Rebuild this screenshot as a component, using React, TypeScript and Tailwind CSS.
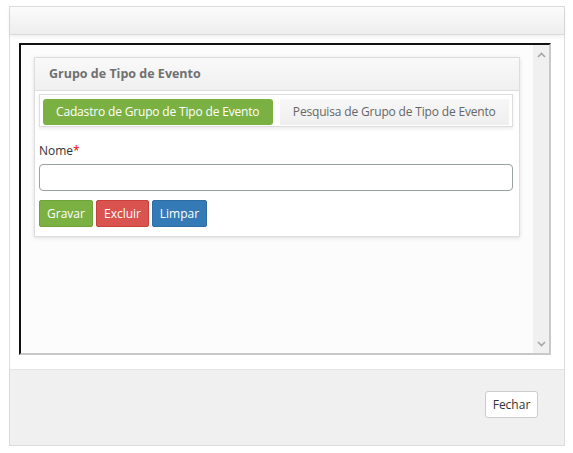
import React from 'react';

function Chevron({ up }: { up?: boolean }) {
  return (
    <svg width="9" height="6" viewBox="0 0 9 6" className="block">
      <path
        d={up ? 'M1 5 L4.5 1.5 L8 5' : 'M1 1 L4.5 4.5 L8 1'}
        fill="none"
        stroke="#a6a6a6"
        strokeWidth="1.6"
      />
    </svg>
  );
}

export default function App() {
  return (
    <div
      className="w-[573px] h-[453px] bg-white pt-[6px] pl-[9px] text-[12px] text-[#333]"
      style={{ fontFamily: '"Open Sans", "Noto Sans", sans-serif' }}
    >
      <div className="w-[556px] h-[440px] border border-[#dcdcdc] flex flex-col">
        {/* modal header */}
        <div className="h-[28px] bg-gradient-to-b from-[#fbfbfb] to-[#eeeeee] border-b border-[#dadada] shadow-[0_2px_4px_rgba(0,0,0,0.07)] relative z-10" />

        {/* modal body */}
        <div className="bg-white pl-[9px] pt-[8px] pb-[14px]">
          <div className="w-[532px] h-[312px] border-2 border-t-[#111] border-l-[#111] border-r-[#c8c8c8] border-b-[#c8c8c8] bg-[#fcfcfc] flex">
            <div className="flex-1 pl-[13px] pr-[13px] pt-[12px]">
              {/* panel */}
              <div className="w-[486px] border border-[#dddddd] bg-white shadow-[0_1px_4px_rgba(0,0,0,0.12)]">
                <div className="h-[33px] bg-gradient-to-b from-[#f9f9f9] to-[#f0f0f0] border-b border-[#dddddd] pl-[14px] flex items-center">
                  <span className="text-[12.5px] font-bold text-[#707070] pt-[1px]">Grupo de Tipo de Evento</span>
                </div>
                <div className="pl-[4px] pr-[6px] pt-[3px] pb-[9px]">
                  {/* tabs */}
                  <div className="border border-[#dddddd] px-[3px] pt-[4px] pb-[1px] flex gap-[7px] shadow-[0_2px_3px_rgba(0,0,0,0.08)]">
                    <div className="flex-1 h-[26px] rounded-[3px] bg-[#7bb142] text-white flex items-center justify-center tracking-[-0.17px]">
                      Cadastro de Grupo de Tipo de Evento
                    </div>
                    <div className="flex-1 h-[26px] bg-gradient-to-b from-[#f7f7f7] to-[#efefef] text-[#666] flex items-center justify-center tracking-[-0.17px]">
                      Pesquisa de Grupo de Tipo de Evento
                    </div>
                  </div>

                  <div className="mt-[15px] leading-[17px] text-[#333]">
                    Nome<span className="text-[#e00]">*</span>
                  </div>
                  <div className="mt-[5px] h-[27px] border border-[#9aa29e] rounded-[4px] bg-white" />

                  <div className="mt-[9px] flex gap-[3px]">
                    <button className="h-[27px] w-[54px] rounded-[2px] bg-[#7bb142] border border-[#6ea23a] text-white">
                      Gravar
                    </button>
                    <button className="h-[27px] w-[53px] rounded-[2px] bg-[#d9534f] border border-[#c9403b] text-white">
                      Excluir
                    </button>
                    <button className="h-[27px] w-[55px] rounded-[2px] bg-[#337ab7] border border-[#2e6da4] text-white">
                      Limpar
                    </button>
                  </div>
                </div>
              </div>
            </div>

            {/* scrollbar */}
            <div className="w-[17px] bg-[#f0f0f0] flex flex-col items-center justify-between pt-[7px] pb-[6px]">
              <Chevron up />
              <Chevron />
            </div>
          </div>
        </div>

        {/* footer */}
        <div className="flex-1 bg-[#f0f0f0] border-t border-[#e4e4e4] pt-[21px] pr-[26px] flex justify-end items-start">
          <button className="h-[27px] w-[53px] bg-white border border-[#cccccc] rounded-[3px] text-[#333]">
            Fechar
          </button>
        </div>
      </div>
    </div>
  );
}
